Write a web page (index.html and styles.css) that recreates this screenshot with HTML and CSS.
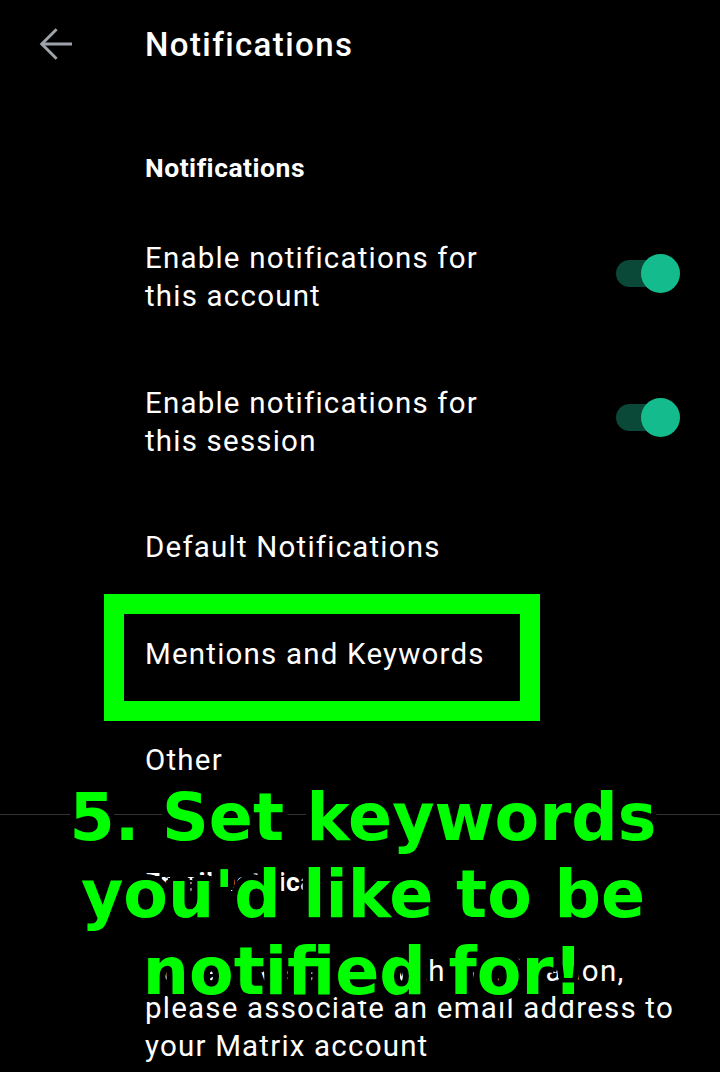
FILE: index.html
```html
<!DOCTYPE html>
<html lang="en">
<head>
<meta charset="utf-8">
<title>Notifications</title>
<link rel="stylesheet" href="styles.css">
</head>
<body>
<div class="screen">
  <header class="topbar">
    <div class="back">
      <svg width="48" height="48" viewBox="0 0 24 24" fill="none" stroke="#9ea3ab" stroke-width="1.5" stroke-linecap="butt" stroke-linejoin="miter">
        <path d="M20 12H5"/>
        <path d="M12.3 4.6L4.9 12l7.4 7.4"/>
      </svg>
    </div>
    <h1 class="title">Notifications</h1>
  </header>

  <section class="group">
    <h2 class="group-title">Notifications</h2>
    <div class="item">
      <div class="item-text narrow">Enable notifications for this account</div>
      <div class="switch"><span class="track"></span><span class="thumb"></span></div>
    </div>
    <div class="item">
      <div class="item-text narrow">Enable notifications for this session</div>
      <div class="switch"><span class="track"></span><span class="thumb"></span></div>
    </div>
    <div class="item"><div class="item-text">Default Notifications</div></div>
    <div class="item"><div class="item-text">Mentions and Keywords</div></div>
    <div class="item"><div class="item-text">Other</div></div>
  </section>

  <div class="divider"></div>

  <section class="group">
    <h2 class="group-title email-title">Email notification</h2>
    <div class="item desc"><div class="item-text">To receive email with notification, please associate an email address to your Matrix account</div></div>
  </section>

  <div class="highlight"></div>
  <div class="caption">5. Set keywords<br>you'd like to be<br>notified for!</div>
</div>
</body>
</html>
```

FILE: styles.css
```css
html, body {
  margin: 0;
  padding: 0;
  background: #000;
}

.screen {
  position: relative;
  width: 720px;
  height: 1072px;
  overflow: hidden;
  background: #000;
  color: #fff;
  font-family: Roboto, "Noto Sans", sans-serif;
}

.topbar {
  height: 90px;
  display: flex;
  align-items: center;
}

.back {
  width: 48px;
  height: 48px;
  margin-left: 32px;
  margin-top: -2px;
}

.back svg {
  display: block;
}

.title {
  margin: 0 0 0 65px;
  font-size: 33px;
  font-weight: 500;
  letter-spacing: 1.4px;
  line-height: 40px;
  color: #fff;
}

.group-title {
  margin: 0;
  padding: 63px 0 22px 145px;
  font-size: 26.5px;
  letter-spacing: 0.5px;
  line-height: 30px;
  font-weight: 700;
  color: #fff;
}

.item {
  display: flex;
  align-items: center;
  padding: 34.25px 40px 34.25px 145px;
}

.item-text {
  flex: 1;
  font-size: 29.5px;
  letter-spacing: 1.2px;
  line-height: 38px;
  color: #fff;
}

.item-text.narrow {
  max-width: 360px;
}

.switch {
  position: relative;
  width: 64px;
  height: 39px;
  margin-left: auto;
  margin-bottom: 8px;
  flex: none;
}

.switch .track {
  position: absolute;
  left: 0;
  top: 6px;
  width: 50px;
  height: 27px;
  border-radius: 14px;
  background: #0a4838;
}

.switch .thumb {
  position: absolute;
  right: 0;
  top: 0;
  width: 39px;
  height: 39px;
  border-radius: 50%;
  background: #14bb8d;
}

.divider {
  height: 1px;
  background: #333;
}

.email-title {
  padding: 52px 0 0 145px;
}

.item.desc {
  padding: 56px 35px 20px 145px;
}

.item.desc .item-text {
  line-height: 37.5px;
}

.highlight {
  position: absolute;
  left: 104px;
  top: 594px;
  width: 436px;
  height: 127px;
  box-sizing: border-box;
  border: 20px solid #00ff00;
}

.caption {
  position: absolute;
  left: 3px;
  top: 780px;
  width: 720px;
  text-align: center;
  font-family: "DejaVu Sans", sans-serif;
  font-weight: 700;
  font-size: 65px;
  line-height: 76.8px;
  color: #00ff00;
  text-shadow:
    6px 0 0 #000, 5.2px 3px 0 #000, 3px 5.2px 0 #000, 0 6px 0 #000,
    -3px 5.2px 0 #000, -5.2px 3px 0 #000, -6px 0 0 #000, -5.2px -3px 0 #000,
    -3px -5.2px 0 #000, 0 -6px 0 #000, 3px -5.2px 0 #000, 5.2px -3px 0 #000,
    3px 0 0 #000, -3px 0 0 #000, 0 3px 0 #000, 0 -3px 0 #000,
    2px 2px 0 #000, -2px 2px 0 #000, 2px -2px 0 #000, -2px -2px 0 #000;
}
```
